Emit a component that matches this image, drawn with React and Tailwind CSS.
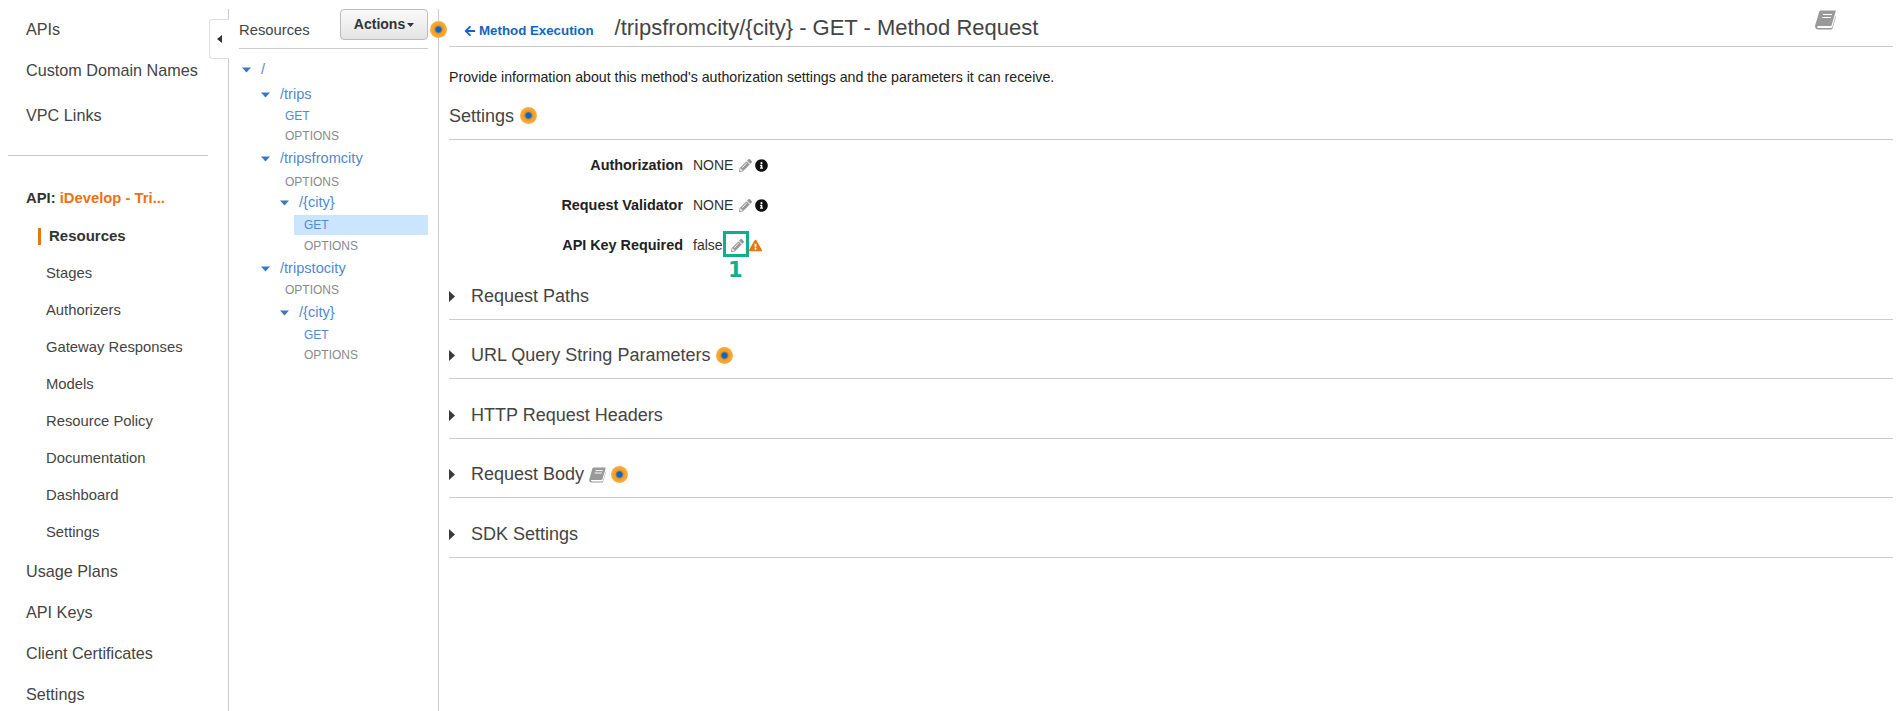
import React from 'react';
import { FaPencilAlt, FaInfoCircle, FaExclamationTriangle, FaArrowLeft } from 'react-icons/fa';

const subNav = ['Stages', 'Authorizers', 'Gateway Responses', 'Models', 'Resource Policy', 'Documentation', 'Dashboard', 'Settings'];
const lowerNav = ['Usage Plans', 'API Keys', 'Client Certificates', 'Settings'];

// pad = left offset of the row, kind = path / get / options
const tree = [
    { label: '/', kind: 'path', pad: 'pl-[3px]', h: 'h-[24px]' },
    { label: '/trips', kind: 'path', pad: 'pl-[22px]', h: 'h-[25px]' },
    { label: 'GET', kind: 'get', pad: 'pl-[46px]', h: 'h-[18px]' },
    { label: 'OPTIONS', kind: 'options', pad: 'pl-[46px]', h: 'h-[21px]' },
    { label: '/tripsfromcity', kind: 'path', pad: 'pl-[22px]', h: 'h-[26px]' },
    { label: 'OPTIONS', kind: 'options', pad: 'pl-[46px]', h: 'h-[19px]' },
    { label: '/{city}', kind: 'path', pad: 'pl-[41px]', h: 'h-[24px]' },
    { label: 'GET', kind: 'get', pad: 'pl-[65px]', h: 'h-[20px]', selected: true },
    { label: 'OPTIONS', kind: 'options', pad: 'pl-[65px]', h: 'h-[22px]' },
    { label: '/tripstocity', kind: 'path', pad: 'pl-[22px]', h: 'h-[24px]' },
    { label: 'OPTIONS', kind: 'options', pad: 'pl-[46px]', h: 'h-[18px]' },
    { label: '/{city}', kind: 'path', pad: 'pl-[41px]', h: 'h-[27px]' },
    { label: 'GET', kind: 'get', pad: 'pl-[65px]', h: 'h-[18px]' },
    { label: 'OPTIONS', kind: 'options', pad: 'pl-[65px]', h: 'h-[22px]' },
];

function Dot({ className = '' }) {
    return (
        <span className={`inline-block w-[17px] h-[17px] rounded-full bg-[radial-gradient(circle,#1166bb_0%,#1166bb_20%,#f59a23_36%,#fbae3c_70%,#fdd08a_90%,#ffffff_100%)] ${className}`}></span>
    );
}

function CaretDown() {
    return (
        <svg width="9" height="6" viewBox="0 0 9 6" className="shrink-0">
            <path d="M0 0.5h9L4.5 5.5z" fill="#3b78c4" />
        </svg>
    );
}

function CaretRight() {
    return (
        <svg width="6" height="11" viewBox="0 0 6 11" className="shrink-0">
            <path d="M0 0l6 5.5L0 11z" fill="#3a3a3a" />
        </svg>
    );
}

// slanted book, FontAwesome 4 style
function Book({ className = '' }) {
    return (
        <svg viewBox="0 0 21 20" className={className}>
            <path d="M5.5 0.5H20c.6 0 .9.5.7 1L16.6 15.2c-.2.6-.7.9-1.3.9H3.4c-1 0-1.3.8-1 1.3.2.4.7.6 1.2.6h12.6c.5 0 .9-.3 1.1-.8l3.2-11 .5.4-3.4 11.6c-.2.9-1 1.3-1.8 1.3H3c-1.7 0-3-1.4-2.9-3.2.1-.9.3-1.8.6-2.7L4.2 1.7C4.4 1 4.9.5 5.5.5z" fill="#999" />
            <path d="M8 4.5h9M7 7.5h9" stroke="#fff" strokeWidth="1.2" />
        </svg>
    );
}

function TreeRow({ row }) {
    const color = row.kind === 'options' ? 'text-[#8a8a8a] text-[12px]' : row.kind === 'get' ? 'text-[#4f8ad2] text-[12px]' : 'text-[#4f8ad2] text-[14.6px]';
    return (
        <div className={`flex items-center ${row.h} ${row.pad}`}>
            {row.kind === 'path' && <CaretDown />}
            {row.kind === 'path' && <span className="w-[10px]"></span>}
            <span className={color}>{row.label}</span>
        </div>
    );
}

function Field({ label, children }) {
    return (
        <div className="flex items-center h-[40px]">
            <div className="w-[234px] mt-[1px] text-right text-[14.4px] font-bold text-[#222]">{label}</div>
            <div className="ml-[10px] flex items-center text-[14px] text-[#333]">{children}</div>
        </div>
    );
}

function Section({ title, children }) {
    return (
        <div className="flex items-center h-[59.5px] border-b border-[#ccc] pt-[14px]">
            <CaretRight />
            <span className="ml-[16px] text-[18px] text-[#444]">{title}</span>
            {children}
        </div>
    );
}

export default function App() {
    return (
        <div className="flex w-[1903px] h-[711px] overflow-hidden bg-white font-['Liberation_Sans',Arial,sans-serif] text-[#444]">
            {/* Left nav */}
            <nav className="w-[228px] shrink-0 pt-[9px]">
                <div className="pl-[26px] text-[16.2px] h-[40px] flex items-center">APIs</div>
                <div className="pl-[26px] text-[16.2px] h-[42px] flex items-center">Custom Domain Names</div>
                <div className="pl-[26px] text-[16.2px] h-[48px] flex items-center">VPC Links</div>
                <div className="ml-[8px] w-[200px] h-[1px] mt-[16px] bg-[#ccc]"></div>
                <div className="pl-[26px] mt-[32px] h-[20px] flex items-center text-[14.8px] font-bold">
                    <span className="text-[#333]">API:&nbsp;</span>
                    <span className="text-[#ec7211]">iDevelop - Tri...</span>
                </div>
                <div className="mt-[18px] flex items-center h-[20px]">
                    <span className="ml-[38px] w-[3px] h-[17px] bg-[#e47911]"></span>
                    <span className="ml-[8px] text-[15px] font-bold text-[#333]">Resources</span>
                </div>
                <div className="mt-[9px]">
                    {subNav.map((item) => (
                        <div key={item} className="pl-[46px] h-[37px] flex items-center text-[14.8px]">{item}</div>
                    ))}
                </div>
                <div>
                    {lowerNav.map((item) => (
                        <div key={item} className="pl-[26px] h-[41px] flex items-center text-[16.2px]">{item}</div>
                    ))}
                </div>
            </nav>

            {/* Resource tree */}
            <aside className="relative w-[210px] shrink-0 mt-[9px] border-l border-[#ccc] pl-[10px]">
                <div className="absolute -left-[20px] top-[10px] w-[20px] h-[40px] rounded-l-[4px] border border-r-0 border-[#ddd] bg-white flex items-center justify-center">
                    <svg width="5" height="8" viewBox="0 0 5 8"><path d="M5 0v8L0 4z" fill="#333" /></svg>
                </div>
                <div className="w-[189px] h-[40px] border-b border-[#ccc] flex items-start justify-between">
                    <span className="text-[14.8px] mt-[10px]">Resources</span>
                    <button className="w-[88px] h-[31px] rounded-[4px] border border-[#bbb] bg-gradient-to-b from-[#fafafa] to-[#e4e4e4] flex items-center justify-center text-[14px] font-bold text-[#333]">
                        Actions
                        <svg width="7" height="4" viewBox="0 0 7 4" className="ml-[2px]"><path d="M0 0h7L3.5 4z" fill="#333" /></svg>
                    </button>
                </div>
                <div className="w-[189px] mt-[9px]">
                    {tree.map((row, i) => (
                        row.selected
                            ? <div key={i} className="ml-[55px] bg-[#cce5ff]"><div className="-ml-[55px]"><TreeRow row={row} /></div></div>
                            : <TreeRow key={i} row={row} />
                    ))}
                </div>
            </aside>

            {/* Method request */}
            <main className="relative flex-1 mt-[9px] border-l border-[#ccc] pl-[10px] pr-[10px]">
                <Dot className="absolute -left-[9px] top-[12px]" />
                <div className="relative h-[38px] border-b border-[#ccc] flex items-center">
                    <a className="ml-[15px] mt-[7px] flex items-center text-[13.3px] font-bold text-[#1166bb]">
                        <FaArrowLeft className="w-[12px] h-[12px] mr-[3px]" />
                        Method Execution
                    </a>
                    <h1 className="ml-[21px] text-[22px] text-[#444] font-normal leading-none">/tripsfromcity/{'{city}'} - GET - Method Request</h1>
                    <Book className="absolute left-[1366px] top-[1px] w-[21px] h-[20px]" />
                </div>
                <p className="mt-[20px] text-[14.2px] leading-[20px] text-[#222]">Provide information about this method's authorization settings and the parameters it can receive.</p>
                <div className="mt-[17px] h-[36px] border-b border-[#ccc] flex items-start">
                    <span className="text-[18px] leading-[24px]">Settings</span>
                    <Dot className="ml-[6px] mt-[3px]" />
                </div>
                <div className="relative mt-[5px]">
                    <Field label="Authorization">
                        NONE
                        <FaPencilAlt className="ml-[6px] w-[13px] h-[13px] text-[#999]" />
                        <FaInfoCircle className="ml-[3px] w-[13px] h-[13px] text-[#111]" />
                    </Field>
                    <Field label="Request Validator">
                        NONE
                        <FaPencilAlt className="ml-[6px] w-[13px] h-[13px] text-[#999]" />
                        <FaInfoCircle className="ml-[3px] w-[13px] h-[13px] text-[#111]" />
                    </Field>
                    <Field label="API Key Required">
                        false
                        <FaPencilAlt className="ml-[8px] w-[13px] h-[13px] text-[#999]" />
                        <FaExclamationTriangle className="ml-[5px] w-[13px] h-[13px] text-[#e47911]" />
                    </Field>
                    {/* annotation */}
                    <div className="absolute left-[274px] top-[86px] w-[26px] h-[26px] border-[3px] border-[#0fae8d]"></div>
                    <div className="absolute left-[279px] top-[112px] font-['DejaVu_Sans',sans-serif] text-[21px] leading-[26px] font-bold text-[#0fae8d]">1</div>
                </div>
                <div className="mt-[-5px]">
                    <Section title="Request Paths" />
                    <Section title="URL Query String Parameters"><Dot className="ml-[6px]" /></Section>
                    <Section title="HTTP Request Headers" />
                    <Section title="Request Body">
                        <Book className="ml-[5px] w-[17px] h-[16px]" />
                        <Dot className="ml-[5px]" />
                    </Section>
                    <Section title="SDK Settings" />
                </div>
            </main>
        </div>
    );
}
